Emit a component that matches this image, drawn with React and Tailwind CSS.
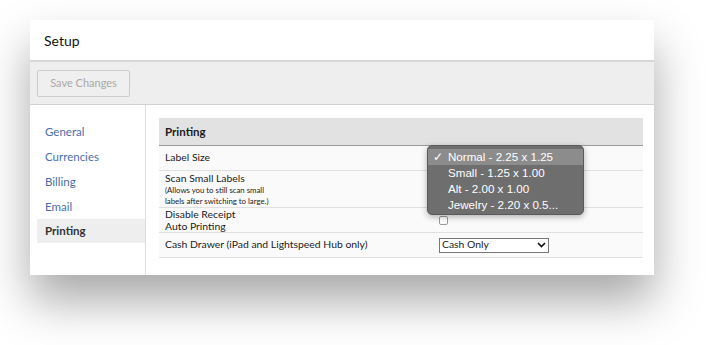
import React from 'react';

const navItems = ['General', 'Currencies', 'Billing', 'Email', 'Printing'];
const sizes = ['Normal - 2.25 x 1.25', 'Small - 1.25 x 1.00', 'Alt - 2.00 x 1.00', 'Jewelry - 2.20 x 0.5...'];

const App = () => {
  return (
    <div className="w-[714px] h-[345px] bg-white pt-[20px] pl-[30px] font-['Lato','Liberation_Sans',sans-serif] text-[#222]">
      <div className="w-[624px] h-[255px] bg-white flex flex-col shadow-[0_26px_44px_rgba(0,0,0,0.34)]">
        {/* Header */}
        <div className="h-[42px] shrink-0 flex items-center pl-[14px] text-[14px] text-[#111] border-b-2 border-[#d6d6d6]">Setup</div>

        {/* Toolbar */}
        <div className="h-[43px] shrink-0 bg-[#eeeeee] border-b border-[#d2d2d2] flex items-center pl-[7px]">
          <button className="h-[27px] w-[93px] border border-[#cccccc] rounded-[2px] text-[11px] text-[#a8a8a8] bg-[#efefef]">
            Save Changes
          </button>
        </div>

        {/* Body */}
        <div className="flex flex-1">
          <div className="w-[116px] border-r border-[#dddddd] pt-[14px] pl-[7px]">
            {navItems.map((item) => (
              <div
                key={item}
                className={
                  item === 'Printing'
                    ? 'h-[24px] flex items-center pl-[8px] text-[11.5px] font-bold text-[#333] bg-[#eeeeee]'
                    : 'h-[25px] flex items-center pl-[8px] text-[11.5px] text-[#4a6ea8]'
                }
              >
                {item}
              </div>
            ))}
          </div>

          <div className="flex-1 pt-[13px] pl-[13px] pr-[11px]">
            <div className="relative text-[10.4px] text-[#1a1a1a]">
              <div className="h-[28px] bg-[#e2e2e2] border-b border-[#9a9a9a] flex items-center pl-[6px] text-[11.5px] font-bold">
                Printing
              </div>
              <div className="grid grid-cols-[269px_1fr] bg-[#fafafa]">
                <div className="h-[25px] flex items-center pl-[6px] border-b border-[#e0e0e0]">Label Size</div>
                <div className="border-b border-[#e0e0e0]" />

                <div className="h-[37px] flex flex-col justify-center pl-[6px] border-b border-[#e0e0e0] leading-[12px]">
                  <span>Scan Small Labels</span>
                  <span className="text-[7.8px] leading-[12px]">(Allows you to still scan small</span>
                  <span className="text-[7.8px] leading-[11px]">labels after switching to large.)</span>
                </div>
                <div className="border-b border-[#e0e0e0]" />

                <div className="h-[25px] flex flex-col justify-center pl-[6px] border-b border-[#e0e0e0] leading-[12px]">
                  <span>Disable Receipt</span>
                  <span>Auto Printing</span>
                </div>
                <div className="border-b border-[#e0e0e0] flex items-center pl-[11px]">
                  <span className="w-[9px] h-[9px] border border-[#999] rounded-[2px] bg-white" />
                </div>

                <div className="h-[25px] flex items-center pl-[6px] border-b border-[#e0e0e0]">
                  Cash Drawer (iPad and Lightspeed Hub only)
                </div>
                <div className="border-b border-[#e0e0e0] flex items-center pl-[11px]">
                  <div className="w-[110px] h-[15px] border border-[#777] bg-white flex items-center justify-between px-[2px] text-[10.4px]">
                    <span>Cash Only</span>
                    <svg width="9" height="6" viewBox="0 0 9 6">
                      <path d="M1 1 L4.5 4.5 L8 1" fill="none" stroke="#111" strokeWidth="1.6" />
                    </svg>
                  </div>
                </div>
              </div>

              {/* Open dropdown menu */}
              <div className="absolute left-[268px] top-[27px] w-[157px] h-[70px] rounded-[5px] bg-[#6e6e6e] border border-[#5a5a5a] shadow-[0_2px_6px_rgba(0,0,0,0.3)] pt-[3px] font-['Liberation_Sans',sans-serif] text-[11.6px] text-white">
                {sizes.map((s, i) => (
                  <div
                    key={s}
                    className={i === 0 ? 'h-[16px] flex items-center bg-[#8c8c8c]' : 'h-[16px] flex items-center'}
                  >
                    <span className="w-[16px] pl-[5px] text-[12px]">{i === 0 ? '✓' : ''}</span>
                    <span className="pl-[4px]">{s}</span>
                  </div>
                ))}
              </div>
            </div>
          </div>
        </div>
      </div>
    </div>
  );
};

export default App;
